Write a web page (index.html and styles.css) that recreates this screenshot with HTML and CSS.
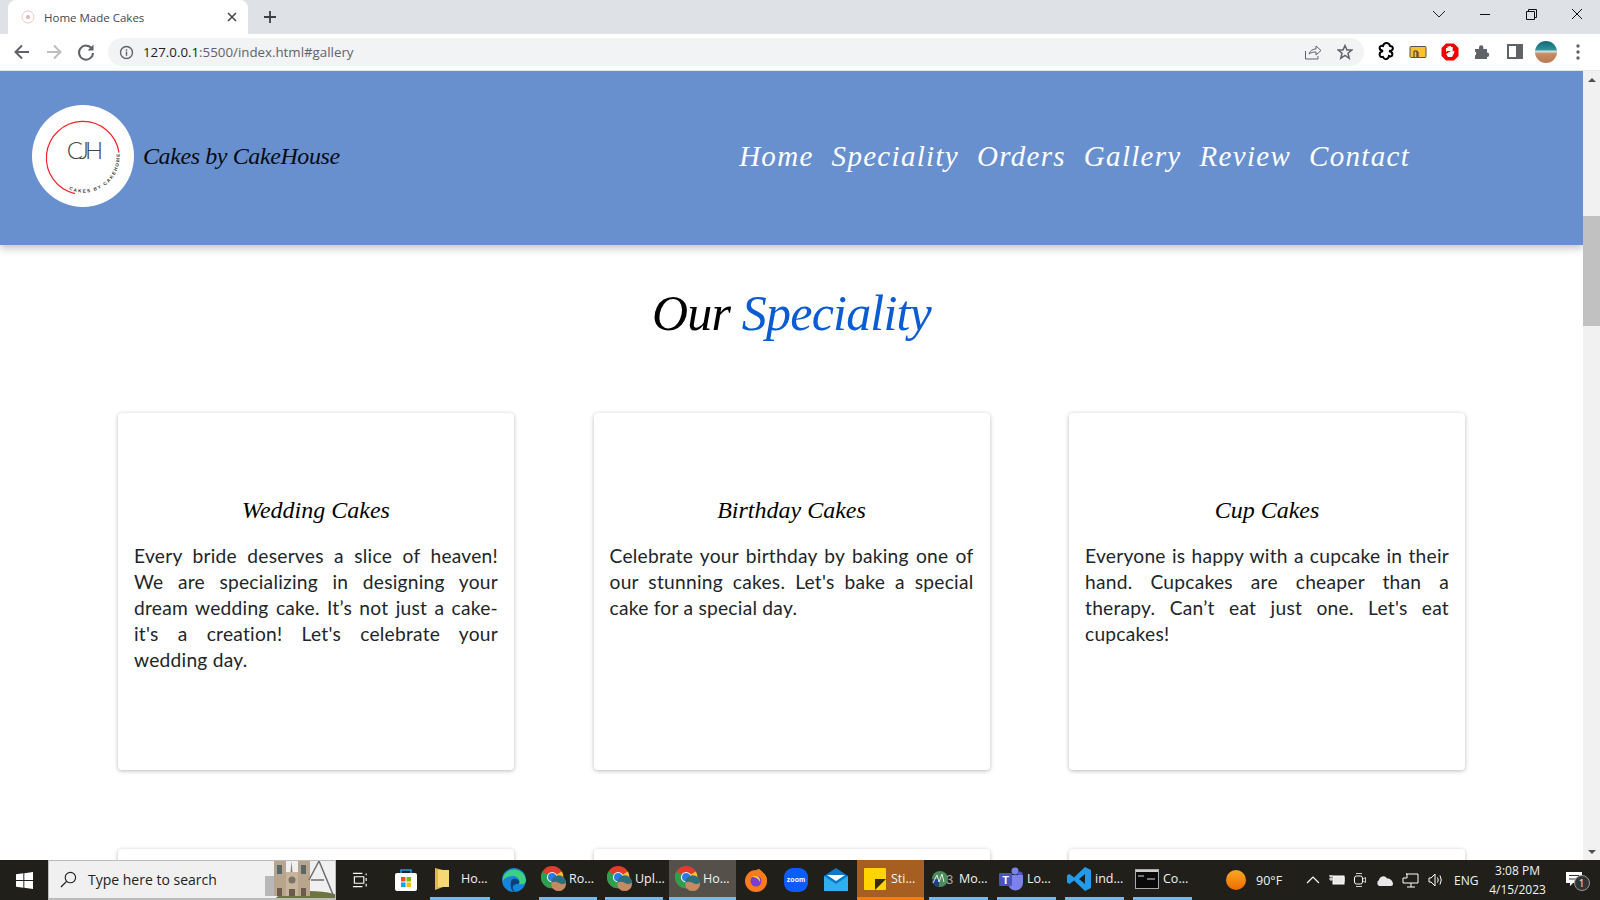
FILE: index.html
```html
<!DOCTYPE html>
<html lang="en">
<head>
    <meta charset="UTF-8">
    <title>Home Made Cakes</title>
    <link rel="stylesheet" href="styles.css">
</head>
<body>
    <svg class="defs" width="0" height="0">
        <symbol id="chrome-logo" viewBox="0 0 28 28">
            <circle cx="12" cy="12" r="12" fill="#e33b2e"/>
            <path d="M12 12 L22.4 6 A12 12 0 0 1 12 24 Z" fill="#fbc02d"/>
            <path d="M12 12 L12 24 A12 12 0 0 1 1.6 6 Z" fill="#2e9e4f"/>
            <circle cx="12" cy="12" r="5.6" fill="#fff"/>
            <circle cx="12" cy="12" r="4.4" fill="#2a7be4"/>
            <circle cx="19" cy="19" r="8" fill="#c58a62"/>
            <path d="M11 18 A8 8 0 0 1 27 18 Q23 21 19 18 Q15 16 11 18 Z" fill="#2c6f7c"/>
        </symbol>
    </svg>

    <!-- browser tabs -->
    <div class="tabstrip">
        <div class="tab">
            <svg class="favicon" viewBox="0 0 14 14" width="14" height="14"><circle cx="7" cy="7" r="6" fill="none" stroke="#f5c6c6"/><circle cx="7" cy="7" r="2" fill="#d8b8b8"/></svg>
            <span class="tab-title">Home Made Cakes</span>
            <svg class="tab-close" viewBox="0 0 10 10" width="10" height="10"><path d="M1 1L9 9M9 1L1 9" stroke="#45484c" stroke-width="1.6"/></svg>
        </div>
        <svg class="new-tab" viewBox="0 0 14 14" width="14" height="14"><path d="M7 1V13M1 7H13" stroke="#3c4043" stroke-width="1.8"/></svg>
        <div class="window-btns">
            <svg viewBox="0 0 46 14" width="46" height="14"><path d="M17 4L23 10L29 4" fill="none" stroke="#222"/></svg>
            <svg viewBox="0 0 46 14" width="46" height="14"><path d="M18 7.5H28" stroke="#111"/></svg>
            <svg viewBox="0 0 46 14" width="46" height="14"><path d="M20.5 4.5V2.5H28.5V10.5H26.5M18.5 4.5H26.5V12.5H18.5Z" fill="none" stroke="#111"/></svg>
            <svg viewBox="0 0 46 14" width="46" height="14"><path d="M18 2L28 12M28 2L18 12" stroke="#111"/></svg>
        </div>
    </div>

    <!-- address bar -->
    <div class="toolbar">
        <svg class="tool" viewBox="0 0 32 32"><path d="M23 16H10M16 9.5L9.5 16L16 22.5" fill="none" stroke="#5f6368" stroke-width="2"/></svg>
        <svg class="tool" viewBox="0 0 32 32"><path d="M9 16H22M16 9.5L22.5 16L16 22.5" fill="none" stroke="#bcbec1" stroke-width="2"/></svg>
        <svg class="tool" viewBox="0 0 32 32"><path d="M22 13A7 7 0 1 0 23 17" fill="none" stroke="#5f6368" stroke-width="2"/><path d="M23.5 8.5V14.5H17.5Z" fill="#5f6368"/></svg>
        <div class="omnibox">
            <svg viewBox="0 0 16 16" width="15" height="15"><circle cx="8" cy="8" r="6.4" fill="none" stroke="#5f6368" stroke-width="1.5"/><path d="M8 7V11.5M8 4.5V6" stroke="#5f6368" stroke-width="1.5"/></svg>
            <span class="url"><span class="url-host">127.0.0.1</span>:5500/index.html#gallery</span>
            <svg class="omni-right" viewBox="0 0 18 16" width="18" height="16"><path d="M1.5 7V15H14V12M5 10C6 6.500 9 5 12 5V2L17 6.500L12 11V8C9 8 7 8.500 5 10Z" fill="none" stroke="#5f6368"/></svg>
            <svg class="omni-star" viewBox="0 0 16 16" width="16" height="16"><path d="M8 1.500L10 6H14.800L11 9.300L12.200 14.300L8 11.500L3.800 14.300L5 9.300L1.200 6H6Z" fill="none" stroke="#5f6368" stroke-width="1.500"/></svg>
        </div>
        <svg class="tool" viewBox="0 0 32 32"><path d="M13 15C8 14 9 9 13 10C14 6 19 6 20 10C24 10 24 15 19 15C24 16 23 22 19 20C18 24 14 24 13 21C9 22 8 16 13 15Z" fill="none" stroke="#000" stroke-width="2"/></svg>
        <svg class="tool" viewBox="0 0 32 32"><rect x="8" y="10.500" width="16" height="11" rx="1" fill="#fbc02d" stroke="#555"/><path d="M12 21V15H15V21M15 16H16V21" fill="none" stroke="#333"/></svg>
        <svg class="tool" viewBox="0 0 32 32"><path d="M12 7.500H20L24.500 12V20L20 24.500H12L7.500 20V12Z" fill="#f00000"/><path d="M12 16V12H13.500V15M13.500 15V10.500H15.300V15M15.300 15V10H17V15M17 15V11H18.700V16L20 14.500L20.500 16L18 21H14L12 18Z" fill="#fff"/></svg>
        <svg class="tool" viewBox="0 0 32 32"><path d="M9 13H13V11.500A2.200 2.200 0 0 1 17.400 11.500V13H21V16.500A2.200 2.200 0 0 1 21 21V23H9V19.500A2.200 2.200 0 0 0 9 15.500Z" fill="#5f6368"/></svg>
        <svg class="tool" viewBox="0 0 32 32"><rect x="10" y="9" width="14" height="13" fill="#fff" stroke="#5f6368" stroke-width="2"/><rect x="18" y="9" width="6" height="13" fill="#5f6368"/></svg>
        <div class="tool avatar-slot"><span class="avatar"></span></div>
        <svg class="tool" viewBox="0 0 32 32"><circle cx="16" cy="10" r="1.700" fill="#5f6368"/><circle cx="16" cy="16" r="1.700" fill="#5f6368"/><circle cx="16" cy="22" r="1.700" fill="#5f6368"/></svg>
    </div>

    <div class="viewport">
        <div class="page">
            <header class="site-header">
                <div class="brand">
                    <div class="logo">
                        <svg viewBox="0 0 102 102" width="102" height="102">
                            <path d="M87 47.700A36.500 36.500 0 1 0 43 88.600" fill="none" stroke="#f0222a" stroke-width="1.200"/>
                            <path id="logo-ring" d="M37 84.500A36 36 0 0 0 86 41" fill="none"/>
                            <text class="logo-ring-text"><textPath href="#logo-ring">CAKES BY CAKEHOME</textPath></text>
                            <text class="logo-mono" x="51" y="54" text-anchor="middle">CJH</text>
                        </svg>
                    </div>
                    <span class="brand-name">Cakes by CakeHouse</span>
                </div>
                <nav class="main-nav">
                    <a href="#home">Home</a>
                    <a href="#speciality">Speciality</a>
                    <a href="#orders">Orders</a>
                    <a href="#gallery">Gallery</a>
                    <a href="#review">Review</a>
                    <a href="#contact">Contact</a>
                </nav>
            </header>

            <h2 class="section-title">Our <span class="accent">Speciality</span></h2>

            <section class="cards">
                <article class="card">
                    <h3>Wedding Cakes</h3>
                    <p>Every bride deserves a slice of heaven! We are specializing in designing your dream wedding cake. It’s not just a cake-it's a creation! Let's celebrate your wedding day.</p>
                </article>
                <article class="card">
                    <h3>Birthday Cakes</h3>
                    <p>Celebrate your birthday by baking one of our stunning cakes. Let's bake a special cake for a special day.</p>
                </article>
                <article class="card">
                    <h3>Cup Cakes</h3>
                    <p>Everyone is happy with a cupcake in their hand. Cupcakes are cheaper than a therapy. Can’t eat just one. Let's eat cupcakes!</p>
                </article>
                <article class="card"></article>
                <article class="card"></article>
                <article class="card"></article>
            </section>
        </div>
        <div class="scrollbar">
            <span class="arrow-up"></span>
            <div class="scroll-track"><div class="scroll-thumb"></div></div>
            <span class="arrow-down"></span>
        </div>
    </div>

    <!-- windows taskbar -->
    <div class="taskbar">
        <div class="start">
            <svg viewBox="0 0 18 18" width="17" height="17"><path d="M0 2.500L7.800 1.400V8.500H0ZM8.800 1.300L18 0V8.500H8.800ZM0 9.500H7.800V16.600L0 15.500ZM8.800 9.500H18V18L8.800 16.700Z" fill="#fff"/></svg>
        </div>
        <div class="search">
            <svg viewBox="0 0 18 18" width="17" height="17"><circle cx="11" cy="7" r="5.500" fill="none" stroke="#222" stroke-width="1.200"/><path d="M7 11L1 17" stroke="#222" stroke-width="1.400"/></svg>
            <span class="search-text">Type here to search</span>
            <svg class="search-art" viewBox="0 0 72 40" width="72" height="40">
                <ellipse cx="46" cy="42" rx="34" ry="9" fill="#6d7440"/>
                <rect x="2" y="18" width="9" height="20" fill="#b8b8b8"/>
                <rect x="11" y="3" width="12" height="35" fill="#b9a48d"/>
                <rect x="35" y="3" width="12" height="35" fill="#b9a48d"/>
                <rect x="23" y="14" width="12" height="24" fill="#c8b49c"/>
                <path d="M28.500 3L29.500 14H27.500Z" fill="#8c8478"/>
                <circle cx="29" cy="22" r="3.500" fill="#7b7266"/>
                <rect x="14" y="7" width="5" height="9" fill="#56696a"/>
                <rect x="38" y="7" width="5" height="9" fill="#56696a"/>
                <rect x="14" y="30" width="5" height="8" fill="#6d5a4b"/>
                <rect x="26" y="31" width="6" height="7" fill="#6d5a4b"/>
                <rect x="38" y="30" width="5" height="8" fill="#6d5a4b"/>
                <path d="M46 22L56 3L71 39M48 22H61" fill="none" stroke="#6e6e6e" stroke-width="1.500"/>
            </svg>
        </div>
        <div class="task-icon task-view">
            <svg viewBox="0 0 18 16" width="17" height="16"><path d="M1 1H11M1 15H11M2.500 4.500H12.500V11.500H2.500Z M15 1V3M15 6V9M15 12V15" fill="none" stroke="#fff" stroke-width="1.200"/></svg>
        </div>
        <div class="task-icon">
            <svg viewBox="0 0 24 24" width="24" height="24"><path d="M7 6V2H17V6" fill="none" stroke="#1aa3e8" stroke-width="1.500"/><rect x="1" y="5" width="22" height="18" rx="2" fill="#fff"/><rect x="7" y="9" width="4.500" height="4.500" fill="#f25022"/><rect x="12.500" y="9" width="4.500" height="4.500" fill="#7fba00"/><rect x="7" y="14.500" width="4.500" height="4.500" fill="#00a4ef"/><rect x="12.500" y="14.500" width="4.500" height="4.500" fill="#ffb900"/></svg>
        </div>
        <div class="task files-task">
            <svg viewBox="0 0 16 24" width="16" height="24"><path d="M1 1L9 3V20L1 23Z" fill="#e0b84c"/><path d="M4 3H15V20H4Z" fill="#f6d775"/></svg>
            <span>Ho...</span>
        </div>
        <div class="task-icon edge-slot">
            <svg viewBox="0 0 24 24" width="24" height="24"><circle cx="12" cy="12" r="12" fill="#1684d8"/><path d="M1 9A12 12 0 0 1 24 12C24 16 20 17 17 16C19 12 15 8 11 8C6 8 2 10 1 13Z" fill="#3fd07f"/><path d="M9 14C9 10 15 10 17 13C18 15 17 16 15 16C11 16 9 20 13 24C10 24 8 19 9 14Z" fill="#0c3f78"/></svg>
        </div>
        <div class="task chrome-task short"><svg class="app-icon"><use href="#chrome-logo"/></svg><span>Ro...</span></div>
        <div class="task chrome-task short second"><svg class="app-icon"><use href="#chrome-logo"/></svg><span>Upl...</span></div>
        <div class="task chrome-task active"><svg class="app-icon"><use href="#chrome-logo"/></svg><span>Ho...</span></div>
        <div class="task-icon">
            <svg viewBox="0 0 24 24" width="24" height="24"><circle cx="12" cy="13" r="11" fill="#ff7a1a"/><path d="M12 2C18 2 23 8 23 13C22 8 19 4 15 1Z" fill="#ffb520"/><circle cx="12" cy="13" r="5.500" fill="#7a3fd0"/><path d="M8 9C12 6 17 9 16 14C14 10 11 9 8 9Z" fill="#ffca3a"/></svg>
        </div>
        <div class="task-icon">
            <svg viewBox="0 0 24 24" width="24" height="24"><rect width="24" height="24" rx="9" fill="#0b5cff"/><text class="zoom-word" x="12" y="14" text-anchor="middle">zoom</text></svg>
        </div>
        <div class="task-icon">
            <svg viewBox="0 0 24 24" width="24" height="24"><path d="M0 8L12 0L24 8V23H0Z" fill="#0f78c8"/><path d="M0 8L12 16L24 8V23H0Z" fill="#2fb0ee"/><path d="M3 7H21L12 13Z" fill="#fff"/></svg>
        </div>
        <div class="task sticky-task">
            <svg viewBox="0 0 22 22" width="22" height="22"><rect width="22" height="22" rx="1" fill="#ffd400"/><path d="M11 22V11H22L11 22Z" fill="#2f2a20"/></svg>
            <span>Sti...</span>
        </div>
        <div class="task wide-gap">
            <svg viewBox="0 0 24 20" width="24" height="20"><circle cx="9" cy="10" r="8" fill="#4c8c5a"/><path d="M1 10H8V18A8 8 0 0 1 1 10Z" fill="#1f3f86"/><path d="M2 14L6 6L8 13L11 5L13 13" fill="none" stroke="#e7e7e7"/><text class="m3-word" x="15" y="15">3</text></svg>
            <span>Mo...</span>
        </div>
        <div class="task wide-gap">
            <svg viewBox="0 0 24 24" width="24" height="24"><circle cx="16" cy="4" r="3.500" fill="#7b83eb"/><circle cx="21" cy="7" r="2.500" fill="#5059c9"/><path d="M9 8H24V16A7 7 0 0 1 9 16Z" fill="#7b83eb"/><rect y="6" width="13" height="13" rx="1" fill="#4b53bc"/><text class="teams-word" x="6.500" y="16.500" text-anchor="middle">T</text></svg>
            <span>Lo...</span>
        </div>
        <div class="task wide-gap">
            <svg viewBox="0 0 24 24" width="24" height="24"><path d="M18 0L24 3V21L18 24L7 13.500L2.500 17L0 15.500V8.500L2.500 7L7 10.500ZM18 7L12 12L18 17Z" fill="#1f9cf0"/></svg>
            <span>ind...</span>
        </div>
        <div class="task wide-gap">
            <svg viewBox="0 0 24 20" width="24" height="20"><rect x="0.500" y="0.500" width="23" height="19" fill="#0a0a0a" stroke="#aaa"/><rect x="1" y="1" width="22" height="2" fill="#ccc"/><path d="M3 7H9M12 10H20" stroke="#ddd"/></svg>
            <span>Co...</span>
        </div>

        <div class="weather">
            <span class="sun"></span>
            <span>90°F</span>
        </div>
        <div class="tray">
            <svg viewBox="0 0 14 8" width="14" height="8"><path d="M1 7L7 1L13 7" fill="none" stroke="#fff" stroke-width="1.200"/></svg>
            <svg viewBox="0 0 16 12" width="16" height="12"><path d="M0 2H4M0 5H4M2 1V7M4 8H15V3" fill="none" stroke="#fff"/><rect x="4" y="2" width="11" height="8" fill="#e7e7e7" stroke="#fff"/></svg>
            <svg viewBox="0 0 12 16" width="12" height="16"><rect x="0.500" y="4" width="8" height="8" rx="2" fill="none" stroke="#fff"/><path d="M9 7L11.500 5.500V10.500L9 9M2 1.500H8M2 14.500H8" fill="none" stroke="#ccc"/></svg>
            <svg viewBox="0 0 18 11" width="18" height="11"><path d="M4 11A3.500 3.500 0 0 1 4 5C5 1 10 0 12 3.500C15 3 18 6 18 9C18 10 17 11 16 11Z" fill="#e8e8e8"/></svg>
            <svg viewBox="0 0 17 15" width="17" height="15"><path d="M4 1H16V10H1V5H5V1ZM9 10V14M5 14H13" fill="none" stroke="#fff"/></svg>
            <svg viewBox="0 0 15 14" width="15" height="14"><path d="M1 5H3L7 1V13L3 9H1ZM9.500 4.500Q11 7 9.500 9.500M12 2.500Q14.500 7 12 11.500" fill="none" stroke="#fff"/></svg>
            <span class="lang">ENG</span>
        </div>
        <div class="clock">
            <span>3:08 PM</span>
            <span>4/15/2023</span>
        </div>
        <div class="notify">
            <svg viewBox="0 0 16 16" width="16" height="16"><path d="M0 0H16V11H7L4 14V11H0Z" fill="#fff"/><path d="M3 3.500H13M3 7H13" stroke="#333"/></svg>
            <span class="notify-badge">1</span>
        </div>
    </div>
</body>
</html>
```

FILE: styles.css
```css
* {
    box-sizing: border-box;
}
body {
    margin: 0;
    height: 900px;
    overflow: hidden;
    display: flex;
    flex-direction: column;
    background-color: #fff;
    font-family: "Open Sans", sans-serif;
}
.defs {
    position: absolute;
}

/* browser tabs */
.tabstrip {
    height: 34px;
    flex: none;
    display: flex;
    align-items: center;
    padding-left: 8px;
    background-color: #dee1e6;
}
.tab {
    width: 240px;
    height: 34px;
    display: flex;
    align-items: center;
    padding: 0 11px 0 13px;
    background-color: #fff;
    border-radius: 8px 8px 0 0;
}
.tab-title {
    flex: 1;
    margin-left: 9px;
    font-size: 11.5px;
    color: #45484c;
}
.new-tab {
    margin-left: 15px;
}
.window-btns {
    margin-left: auto;
    margin-bottom: 6px;
    display: flex;
}

/* address bar */
.toolbar {
    height: 37px;
    flex: none;
    display: flex;
    align-items: center;
    padding: 0 6px;
    background-color: #fff;
    border-bottom: 1px solid #e3e5e8;
}
.tool {
    width: 32px;
    height: 32px;
    flex: none;
}
.omnibox {
    flex: 1;
    height: 28px;
    margin: 0 6px;
    display: flex;
    align-items: center;
    padding: 0 11px;
    background-color: #f1f3f4;
    border-radius: 14px;
}
.url {
    margin-left: 9px;
    font-size: 13.3px;
    color: #5f6368;
}
.url-host {
    color: #202124;
}
.omni-right {
    margin-left: auto;
}
.omni-star {
    margin-left: 15px;
}
.avatar-slot {
    display: flex;
    align-items: center;
    justify-content: center;
}
.avatar {
    width: 22px;
    height: 22px;
    border-radius: 50%;
    background: linear-gradient(#14697a 0%, #2d8d98 38%, #cfe1df 48%, #c78b63 58%, #b87a55 100%);
}

/* page */
.viewport {
    height: 789px;
    flex: none;
    display: flex;
    overflow: hidden;
}
.page {
    flex: 1;
    overflow: hidden;
}
.site-header {
    height: 174px;
    display: flex;
    align-items: center;
    justify-content: space-between;
    padding: 0 173px 4px 32px;
    background-color: #6890cf;
    box-shadow: 0 3px 8px rgba(0, 0, 0, 0.25);
}
.brand {
    display: flex;
    align-items: center;
}
.logo {
    width: 102px;
    height: 102px;
    border-radius: 50%;
    background-color: #fff;
}
.logo-mono {
    font-family: "Lato", sans-serif;
    font-size: 24px;
    font-weight: 300;
    letter-spacing: -4px;
    fill: #444;
}
.logo-ring-text {
    font-family: "Liberation Sans", sans-serif;
    font-size: 4.6px;
    font-weight: 700;
    letter-spacing: 1.4px;
    fill: #333;
}
.brand-name {
    margin-left: 9px;
    font-family: "Liberation Serif", serif;
    font-style: italic;
    font-size: 24px;
    letter-spacing: -0.4px;
    color: #0a0a12;
}
.main-nav {
    display: flex;
    gap: 18px;
}
.main-nav a {
    font-family: "Liberation Serif", serif;
    font-style: italic;
    font-size: 29px;
    letter-spacing: 1.3px;
    color: #fff;
    text-decoration: none;
}
.section-title {
    margin: 34px 0 66px;
    height: 68px;
    text-align: center;
    font-family: "Liberation Serif", serif;
    font-style: italic;
    font-weight: 400;
    font-size: 50px;
    letter-spacing: -0.8px;
    line-height: 68px;
    color: #000;
}
.accent {
    color: #0a5cd0;
}
.cards {
    display: grid;
    grid-template-columns: repeat(3, 396px);
    column-gap: 79.5px;
    row-gap: 79px;
    padding: 0 118px;
}
.card {
    min-height: 357px;
    padding: 78px 16px 0;
    border-radius: 4px;
    background-color: #fff;
    box-shadow: 0 1px 4px rgba(0, 0, 0, 0.28);
}
.card h3 {
    margin: 0 0 14px;
    text-align: center;
    font-family: "Liberation Serif", serif;
    font-style: italic;
    font-weight: 400;
    font-size: 24px;
    line-height: 38px;
    color: #000;
}
.card p {
    margin: 0;
    text-align: justify;
    font-family: "Lato", sans-serif;
    font-size: 19.2px;
    letter-spacing: 0.25px;
    line-height: 26px;
    color: #212529;
}

/* scrollbar */
.scrollbar {
    width: 17px;
    flex: none;
    display: flex;
    flex-direction: column;
    align-items: center;
    background-color: #f1f1f1;
}
.arrow-up,
.arrow-down {
    width: 0;
    height: 0;
    flex: none;
    border-left: 4px solid transparent;
    border-right: 4px solid transparent;
}
.arrow-up {
    margin: 7px 0;
    border-bottom: 4px solid #505050;
}
.arrow-down {
    margin: 6px 0;
    border-top: 4px solid #505050;
}
.scroll-track {
    flex: 1;
    width: 100%;
    padding-top: 127px;
}
.scroll-thumb {
    height: 110px;
    background-color: #c1c1c1;
}

/* taskbar */
.taskbar {
    height: 40px;
    flex: none;
    display: flex;
    align-items: stretch;
    background-color: #211f1a;
    color: #f2f2f2;
    font-family: "Open Sans", sans-serif;
    font-size: 12.5px;
}
.start {
    width: 48px;
    flex: none;
    display: flex;
    align-items: center;
    justify-content: center;
}
.search {
    width: 288px;
    flex: none;
    display: flex;
    align-items: center;
    padding-left: 11px;
    overflow: hidden;
    background-color: #f0f0f0;
    border: 1px solid #bcbcbc;
    border-bottom-width: 2px;
}
.search-text {
    margin-left: 11px;
    font-size: 14px;
    color: #222;
}
.search-art {
    margin-left: auto;
    align-self: flex-end;
}
.task-icon {
    width: 40px;
    flex: none;
    display: flex;
    align-items: center;
    justify-content: center;
}
.task-view {
    width: 48px;
    margin-right: 2px;
}
.task {
    width: 59px;
    flex: none;
    display: flex;
    align-items: center;
    gap: 4px;
    padding-left: 2px;
    border-bottom: 3px solid #76b9ed;
    white-space: nowrap;
}
.files-task {
    width: 60px;
    margin-left: 4px;
    padding-left: 4px;
    gap: 11px;
}
.edge-slot {
    margin-left: 4px;
}
.app-icon {
    width: 26px;
    height: 26px;
    flex: none;
}
.chrome-task {
    gap: 2px;
}
.chrome-task.short {
    width: 58px;
    margin-left: 5px;
}
.chrome-task.second {
    margin-left: 8px;
}
.chrome-task.active {
    width: 67px;
    margin-left: 6px;
    padding-left: 6px;
    background-color: #55514a;
}
.sticky-task {
    width: 67px;
    margin-left: 1px;
    padding-left: 7px;
    gap: 5px;
    background-color: #a65f20;
    border-bottom-color: #f57c12;
}
.wide-gap {
    margin-left: 9px;
}
.sticky-task + .wide-gap {
    margin-left: 5px;
}
.zoom-word {
    font-family: "Liberation Sans", sans-serif;
    font-size: 7px;
    font-weight: 700;
    fill: #fff;
}
.m3-word {
    font-family: "Liberation Sans", sans-serif;
    font-size: 13px;
    fill: #aaa;
}
.teams-word {
    font-family: "Liberation Sans", sans-serif;
    font-size: 11px;
    font-weight: 700;
    fill: #fff;
}
.weather {
    margin-left: 34px;
    display: flex;
    align-items: center;
    gap: 10px;
}
.sun {
    width: 20px;
    height: 20px;
    border-radius: 50%;
    background: linear-gradient(#f9a825, #ef6c00);
}
.tray {
    margin-left: 24px;
    display: flex;
    align-items: center;
    gap: 9px;
}
.lang {
    margin-left: 2px;
    font-size: 12px;
}
.clock {
    width: 76px;
    margin-left: 1px;
    display: flex;
    flex-direction: column;
    align-items: center;
    justify-content: center;
    font-size: 12px;
    line-height: 19px;
}
.notify {
    margin-left: 10px;
    position: relative;
    display: flex;
    align-items: center;
}
.notify-badge {
    position: absolute;
    left: 8px;
    top: 15px;
    width: 16px;
    height: 16px;
    text-align: center;
    font-size: 10px;
    line-height: 14px;
    background-color: #333;
    border: 1px solid #999;
    border-radius: 50%;
}
```
